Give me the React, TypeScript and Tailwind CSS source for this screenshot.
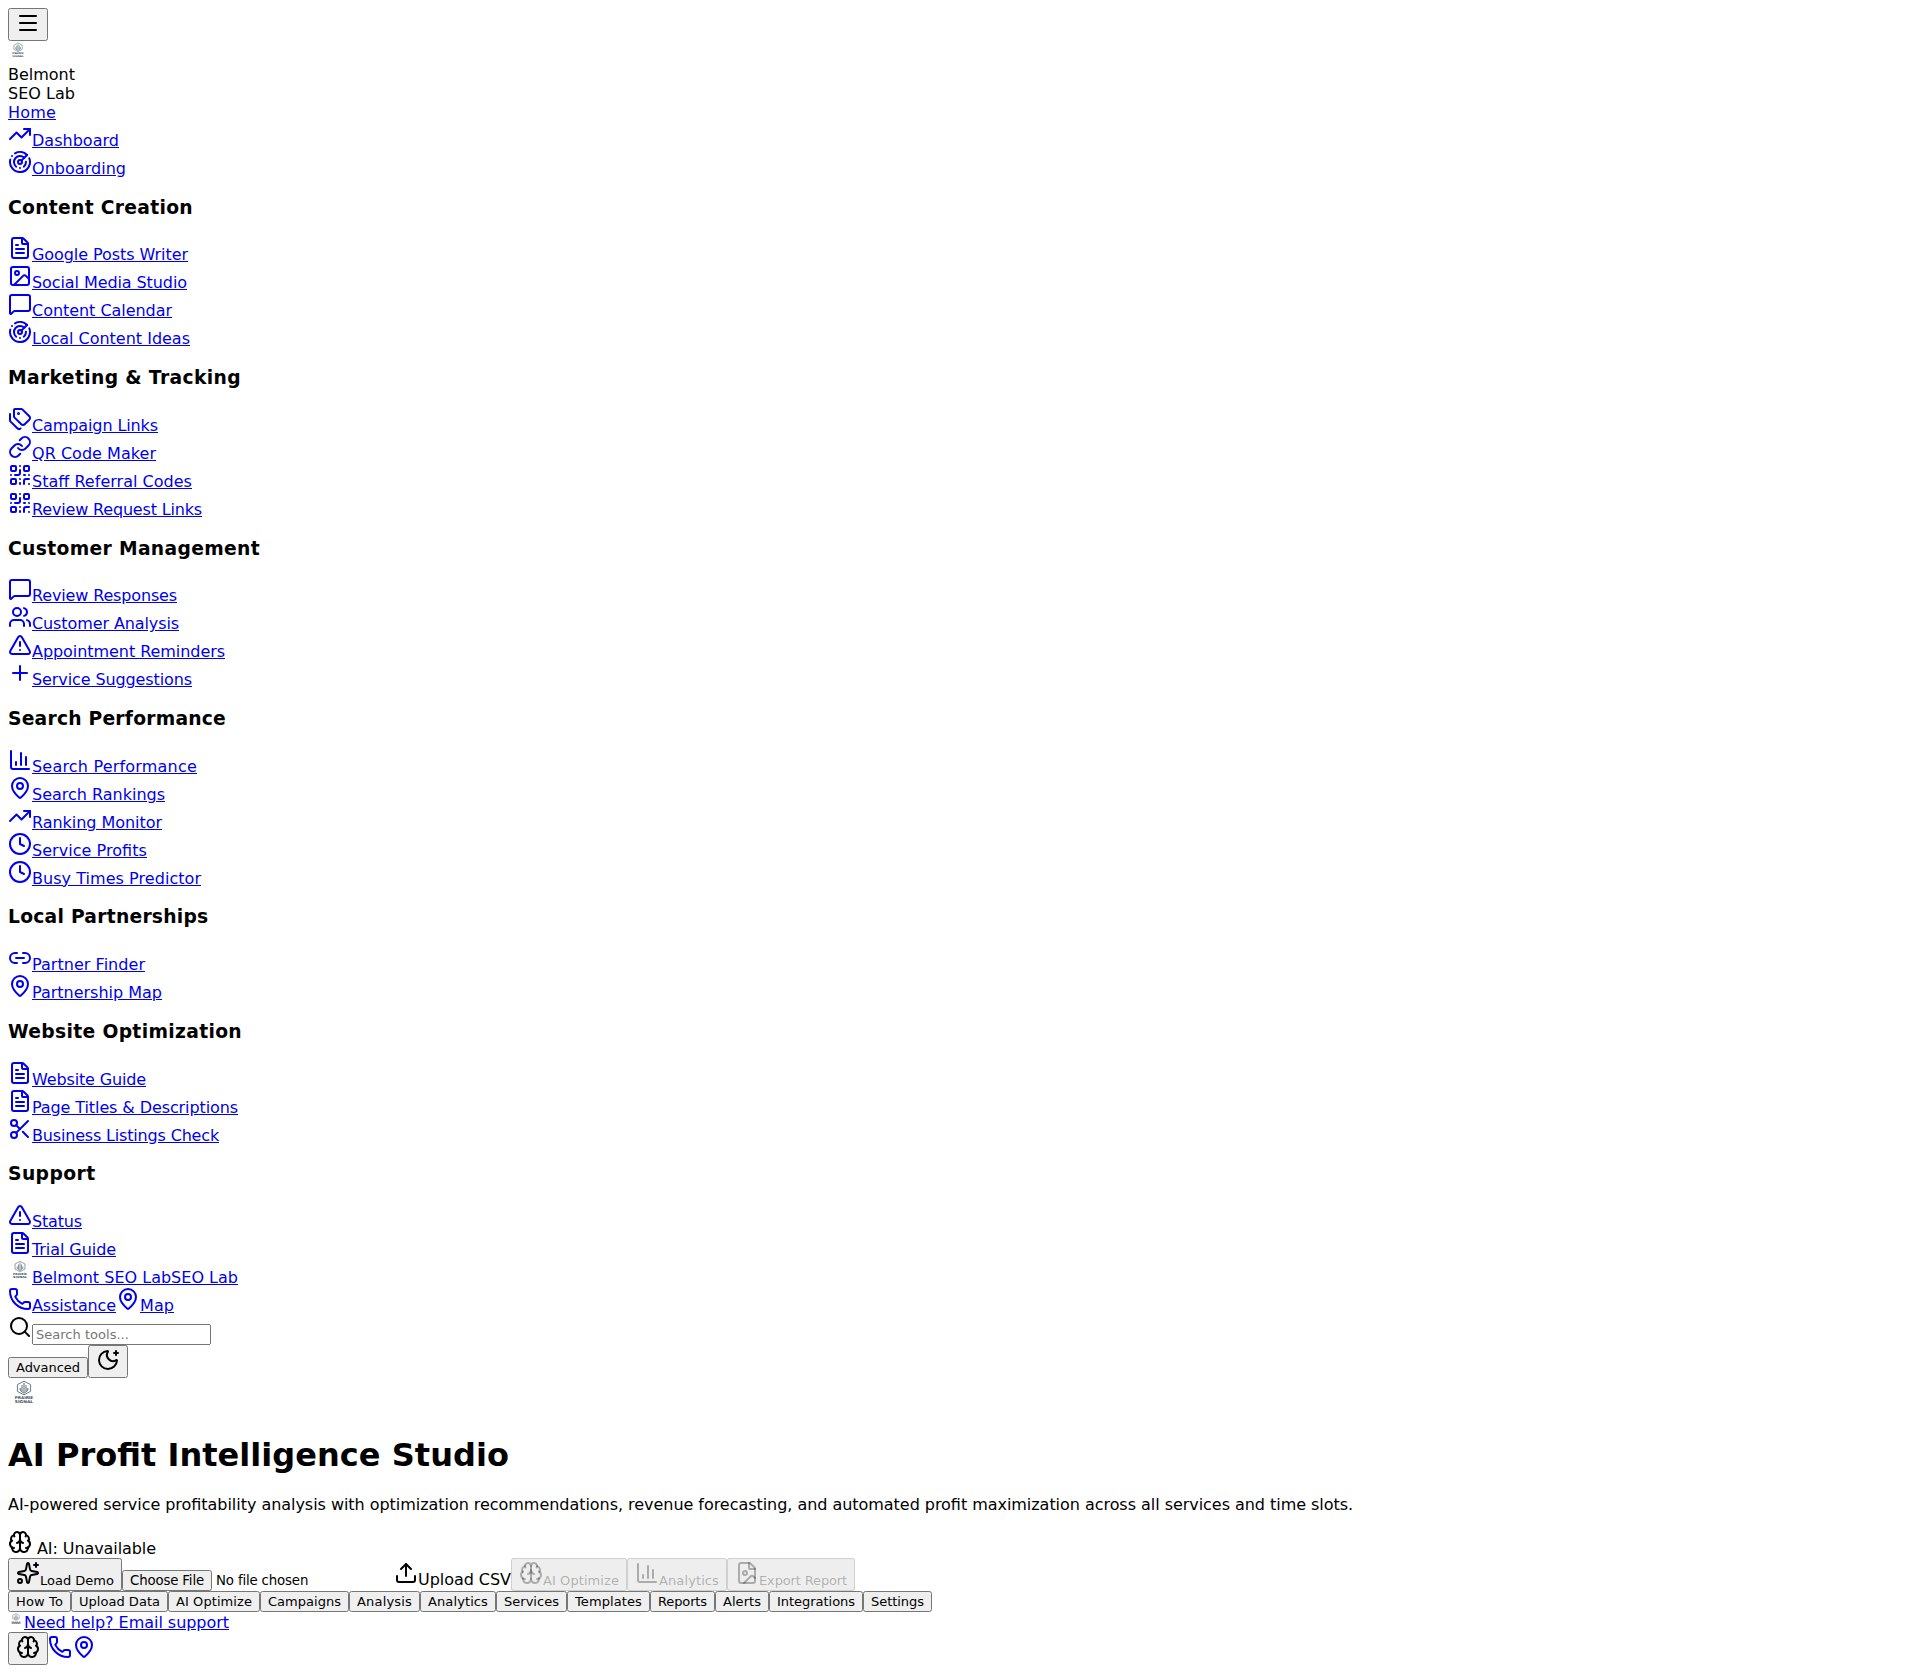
import React, { useLayoutEffect, useRef, useState } from 'react';
import {
  Brain, ChartColumn, Clock, FileImage, FileText, Image, Link, Link2, MapPin, Menu, MessageSquare,
  MoonStar, Phone, Plus, QrCode, Radar, Scissors, Search, Sparkles, Tags, TrendingUp, TriangleAlert,
  Upload, Users, type LucideIcon,
} from 'lucide-react';

const linkClass = 'text-[#0000ee] underline';
const buttonClass =
  '[appearance:revert] [background:revert] [border:revert] [border-radius:revert] [padding:revert] [color:revert] text-[13.3333px] leading-[normal] align-baseline cursor-default whitespace-nowrap';

function Icon({ of: Glyph }: { of: LucideIcon }) {
  return <Glyph className="inline align-baseline" size={24} />;
}

/** Text whose letter spacing is tuned so that the run is exactly `w` pixels wide. */
function Fit({ w, small, children }: { w: number; small?: boolean; children: string }) {
  const ref = useRef<HTMLSpanElement>(null);
  const [spacing, setSpacing] = useState(0);
  useLayoutEffect(() => {
    const natural = ref.current!.getBoundingClientRect().width;
    setSpacing((w - natural) / children.length);
  }, [w, children]);
  return (
    <span
      ref={ref}
      className={small ? "whitespace-nowrap [font-feature-settings:'liga'] text-[13px]" : "whitespace-nowrap [font-feature-settings:'liga']"}
      style={{ letterSpacing: spacing }}
    >
      {children}
    </span>
  );
}

function Logo({ size }: { size: number }) {
  return (
    <svg className="inline align-baseline" width={size} height={size} viewBox="0 0 32 32" fill="none" stroke="#4b5a68">
      <path d="M16 3.2 22.6 6.6V13.4L16 16.8 9.4 13.4V6.6Z" strokeWidth="0.8" />
      <path d="M16 5v9M14 7.2v6M18 7.2v6M12.2 10v2.4l3.8 2.8 3.8-2.8V10" strokeWidth="0.9" />
      <g fill="#3c4b5b" stroke="none" fontFamily="'DejaVu Sans', sans-serif" fontWeight="700" fontSize="3.9" textAnchor="middle">
        <text x="16" y="21" textLength="18.4" lengthAdjust="spacingAndGlyphs">PRAIRIE</text>
        <text x="16" y="24.9" textLength="18.4" lengthAdjust="spacingAndGlyphs">SIGNAL</text>
      </g>
    </svg>
  );
}

type Item = [LucideIcon, string, number];

function NavLink({ item: [icon, label, w] }: { item: Item }) {
  return (
    <a href="#" className={linkClass}><Icon of={icon} /><Fit w={w}>{label}</Fit></a>
  );
}

const sections: { title: string; w: number; items: Item[] }[] = [
  { title: 'Content Creation', w: 185, items: [[FileText, 'Google Posts Writer', 156], [Image, 'Social Media Studio', 155], [MessageSquare, 'Content Calendar', 140], [Radar, 'Local Content Ideas', 158]] },
  { title: 'Marketing & Tracking', w: 233, items: [[Tags, 'Campaign Links', 126], [Link, 'QR Code Maker', 124], [QrCode, 'Staff Referral Codes', 160], [QrCode, 'Review Request Links', 170]] },
  { title: 'Customer Management', w: 252, items: [[MessageSquare, 'Review Responses', 145], [Users, 'Customer Analysis', 147], [TriangleAlert, 'Appointment Reminders', 193], [Plus, 'Service Suggestions', 160]] },
  { title: 'Search Performance', w: 218, items: [[ChartColumn, 'Search Performance', 165], [MapPin, 'Search Rankings', 133], [TrendingUp, 'Ranking Monitor', 130], [Clock, 'Service Profits', 115], [Clock, 'Busy Times Predictor', 169]] },
  { title: 'Local Partnerships', w: 200.5, items: [[Link2, 'Partner Finder', 113], [MapPin, 'Partnership Map', 130]] },
  { title: 'Website Optimization', w: 234, items: [[FileText, 'Website Guide', 114], [FileText, 'Page Titles & Descriptions', 206], [Scissors, 'Business Listings Check', 187]] },
  { title: 'Support', w: 87.5, items: [[TriangleAlert, 'Status', 50], [FileText, 'Trial Guide', 84]] },
];

const tabs: [string, number][] = [
  ['How To', 47], ['Upload Data', 81], ['AI Optimize', 76], ['Campaigns', 73], ['Analysis', 55], ['Analytics', 60],
  ['Services', 55], ['Templates', 67], ['Reports', 49], ['Alerts', 38], ['Integrations', 78], ['Settings', 53],
];

export default function App() {
  return (
    <div className="p-2 bg-white text-black text-base leading-[normal] font-['DejaVu_Sans',sans-serif]">
      <div><button className={buttonClass}><Icon of={Menu} /></button></div>
      <div><Logo size={20} /></div>
      <div><Fit w={67}>Belmont</Fit></div>
      <div><Fit w={67}>SEO Lab</Fit></div>
      <nav>
        <div><a href="#" className={linkClass}><Fit w={48}>Home</Fit></a></div>
        <div><NavLink item={[TrendingUp, 'Dashboard', 87]} /></div>
        <div><NavLink item={[Radar, 'Onboarding', 94]} /></div>
        {sections.map((s) => (
          <section key={s.title}>
            <h3 className="my-[18.72px] text-[18.72px] leading-[normal] font-bold"><Fit w={s.w}>{s.title}</Fit></h3>
            {s.items.map((item) => (
              <div key={item[1]}><NavLink item={item} /></div>
            ))}
          </section>
        ))}
      </nav>
      <header>
        <div><a href="#" className={linkClass}><Logo size={24} /><Fit w={206}>Belmont SEO LabSEO Lab</Fit></a></div>
        <div><NavLink item={[Phone, 'Assistance', 84]} /><NavLink item={[MapPin, 'Map', 34]} /></div>
        <div>
          <Icon of={Search} />
          <input
            placeholder="Search tools..."
            className="w-[179px] [appearance:revert] [background:revert] [border:revert] [border-radius:revert] [padding:revert] text-[13.3333px] leading-[normal] placeholder:text-[13px] placeholder:tracking-[0.02px] placeholder:text-[#757575]"
          />
        </div>
        <div>
          <button className={buttonClass}><Fit small w={64}>Advanced</Fit></button>
          <button className={buttonClass}><Icon of={MoonStar} /></button>
        </div>
      </header>
      <main>
        <div><Logo size={32} /></div>
        <h1 className="my-[21.44px] text-[32px] leading-[normal] font-bold"><Fit w={501}>AI Profit Intelligence Studio</Fit></h1>
        <p className="my-4"><Fit w={1345}>AI-powered service profitability analysis with optimization recommendations, revenue forecasting, and automated profit maximization across all services and time slots.</Fit></p>
        <div><Icon of={Brain} /><Fit w={124}>{' AI: Unavailable'}</Fit></div>
        <div>
          <button className={buttonClass}><Icon of={Sparkles} /><Fit small w={74}>Load Demo</Fit></button>
          <label>
            <input
              type="file"
              className="w-[272px] text-[13.3333px] leading-[normal] tracking-[-0.16px] file:[appearance:revert] file:[background:revert] file:[border:revert] file:[border-radius:revert] file:[padding:revert] file:[color:revert]"
            />
            <Icon of={Upload} /><Fit w={93}>Upload CSV</Fit>
          </label>
          <button disabled className={buttonClass}><Icon of={Brain} /><Fit small w={76}>AI Optimize</Fit></button>
          <button disabled className={buttonClass}><Icon of={ChartColumn} /><Fit small w={60}>Analytics</Fit></button>
          <button disabled className={buttonClass}><Icon of={FileImage} /><Fit small w={88}>Export Report</Fit></button>
        </div>
        <div>{tabs.map(([t, w]) => <button key={t} className={buttonClass}><Fit small w={w}>{t}</Fit></button>)}</div>
      </main>
      <footer>
        <div><a href="#" className={linkClass}><Logo size={16} /><Fit w={205}>Need help? Email support</Fit></a></div>
        <div>
          <button className={buttonClass}><Icon of={Brain} /></button>
          <a href="#" className={linkClass}><Icon of={Phone} /></a>
          <a href="#" className={linkClass}><Icon of={MapPin} /></a>
        </div>
      </footer>
    </div>
  );
}
